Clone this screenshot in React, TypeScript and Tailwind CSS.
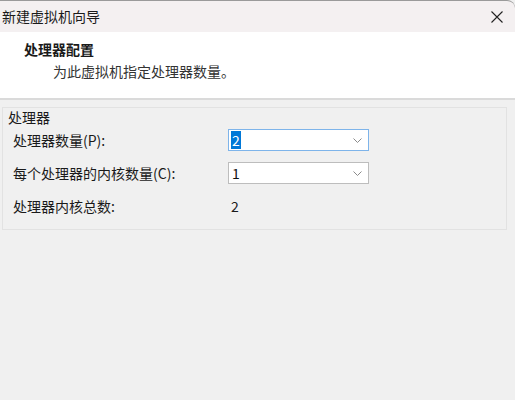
import React from "react";

const font = { fontFamily: '"Noto Sans CJK SC", "Noto Sans", sans-serif' };

const Chevron = () => (
  <svg width="9" height="5" viewBox="0 0 9 5" className="text-[#8a8a8a]">
    <path d="M0.5 0.5 L4.5 4.5 L8.5 0.5" fill="none" stroke="currentColor" strokeWidth="1" />
  </svg>
);

const Combo = ({ value, focused }: { value: string; focused?: boolean }) => (
  <div
    className={`flex h-[22px] w-[141px] items-center justify-between bg-white pl-[2px] pr-[6px] border ${
      focused ? "border-[#7eb4ea]" : "border-[#bdbdbd]"
    }`}
  >
    {focused ? (
      <span className="bg-[#0078d7] px-[1px] text-[14px] leading-[18px] text-white">{value}</span>
    ) : (
      <span className="px-[1px] text-[14px] leading-[18px] text-[#111]">{value}</span>
    )}
    <Chevron />
  </div>
);

export default function App() {
  return (
    <div className="h-[400px] w-[515px] overflow-hidden bg-[#f0f0f0] text-[#1a1a1a]" style={font}>
      {/* Title bar */}
      <div className="flex h-[32px] items-center justify-between rounded-tr-[8px] border-t border-[#9a9a9a] bg-[#f4f0f1] pl-[2px] pr-[12px]">
        <span className="text-[14px]">新建虚拟机向导</span>
        <svg width="12" height="12" viewBox="0 0 12 12">
          <path d="M0.5 0.5 L11.5 11.5 M11.5 0.5 L0.5 11.5" stroke="#222" strokeWidth="1.1" />
        </svg>
      </div>

      {/* Header */}
      <div className="h-[68px] border-b-2 border-[#dadada] bg-white pt-[7px]">
        <div className="pl-[24px] text-[14px] font-bold leading-[20px]">处理器配置</div>
        <div className="pl-[53px] pt-[2px] text-[14px] leading-[20px] text-[#333]">为此虚拟机指定处理器数量。</div>
      </div>

      {/* Group box */}
      <div className="px-[2px] pt-[7px]">
        <div className="h-[123px] w-[505px] border border-[#e2e2e2] pl-[5px]">
          <div className="text-[14px] leading-[18px]">处理器</div>
          <div className="mt-[3px] flex flex-col gap-[11px] pl-[5px]">
            <div className="flex items-center">
              <span className="w-[215px] text-[14px]">处理器数量(P):</span>
              <Combo value="2" focused />
            </div>
            <div className="flex items-center">
              <span className="w-[215px] text-[14px]">每个处理器的内核数量(C):</span>
              <Combo value="1" />
            </div>
            <div className="flex h-[22px] items-center">
              <span className="w-[215px] text-[14px]">处理器内核总数:</span>
              <span className="pl-[3px] text-[14px]">2</span>
            </div>
          </div>
        </div>
      </div>
    </div>
  );
}
